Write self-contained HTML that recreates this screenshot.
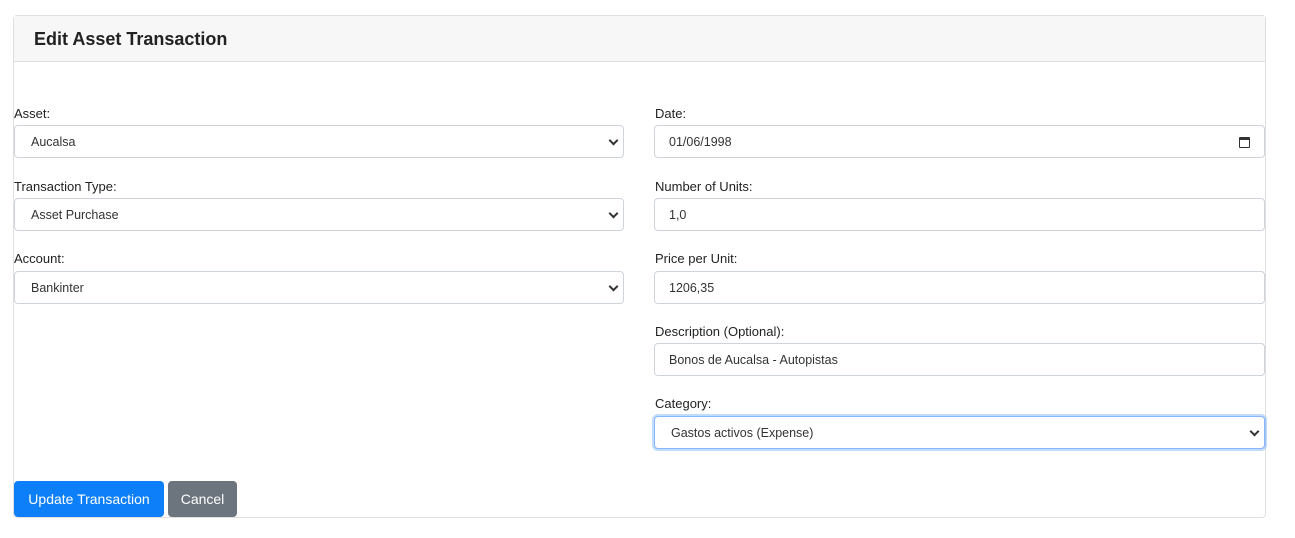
<!DOCTYPE html>
<html><head><style>
*{box-sizing:border-box;margin:0;padding:0}
body{width:1295px;height:538px;background:#fff;font-family:"Liberation Sans",sans-serif;color:#212529;position:relative;overflow:hidden}
.card{position:absolute;left:13px;top:15px;width:1253px;height:503px;border:1px solid #dfdfdf;border-radius:4px}
.hdr{height:46px;background:#f7f7f7;border-bottom:1px solid #dfdfdf;padding-left:20px;font-size:18px;font-weight:bold;line-height:47px;color:#222}
.l{position:absolute;font-size:13px;color:#222}
.f{position:absolute;height:33px;border:1px solid #ced4da;border-radius:4px;font-size:12.5px;line-height:32px;padding-left:16px;color:#333;background:#fff}
.f.sel::after{content:"";position:absolute;right:6px;top:11px;width:5px;height:5px;border-right:2px solid #333;border-bottom:2px solid #333;transform:rotate(45deg)}
.focus{border-color:#86b7fe;box-shadow:0 0 0 2px rgba(13,110,253,.25)}
.btn{position:absolute;top:481px;height:36px;border-radius:4px;color:#fff;font-size:14px;line-height:36px;text-align:center}
</style></head><body>
<div class="card"><div class="hdr">Edit Asset Transaction</div></div>
<div class="l" style="left:14px;top:106px">Asset:</div>
<div class="f sel" style="left:14px;top:125px;width:610px">Aucalsa</div>
<div class="l" style="left:14px;top:179px">Transaction Type:</div>
<div class="f sel" style="left:14px;top:198px;width:610px">Asset Purchase</div>
<div class="l" style="left:14px;top:251px">Account:</div>
<div class="f sel" style="left:14px;top:271px;width:610px">Bankinter</div>
<div class="l" style="left:655px;top:106px">Date:</div>
<div class="f" style="left:654px;top:125px;width:611px;padding-left:14px">01/06/1998<span style="position:absolute;right:14px;top:11px;width:11px;height:11px;border:1.5px solid #333;border-top-width:3px;border-radius:1px"></span></div>
<div class="l" style="left:655px;top:179px">Number of Units:</div>
<div class="f" style="left:654px;top:198px;width:611px;padding-left:14px">1,0</div>
<div class="l" style="left:655px;top:251px">Price per Unit:</div>
<div class="f" style="left:654px;top:271px;width:611px;padding-left:14px">1206,35</div>
<div class="l" style="left:655px;top:324px">Description (Optional):</div>
<div class="f" style="left:654px;top:343px;width:611px;padding-left:14px">Bonos de Aucalsa - Autopistas</div>
<div class="l" style="left:655px;top:396px">Category:</div>
<div class="f sel focus" style="left:654px;top:416px;width:611px">Gastos activos (Expense)</div>
<div class="btn" style="left:14px;width:150px;background:#0d7ff8">Update Transaction</div>
<div class="btn" style="left:168px;width:69px;background:#6c757d">Cancel</div>
</body></html>
